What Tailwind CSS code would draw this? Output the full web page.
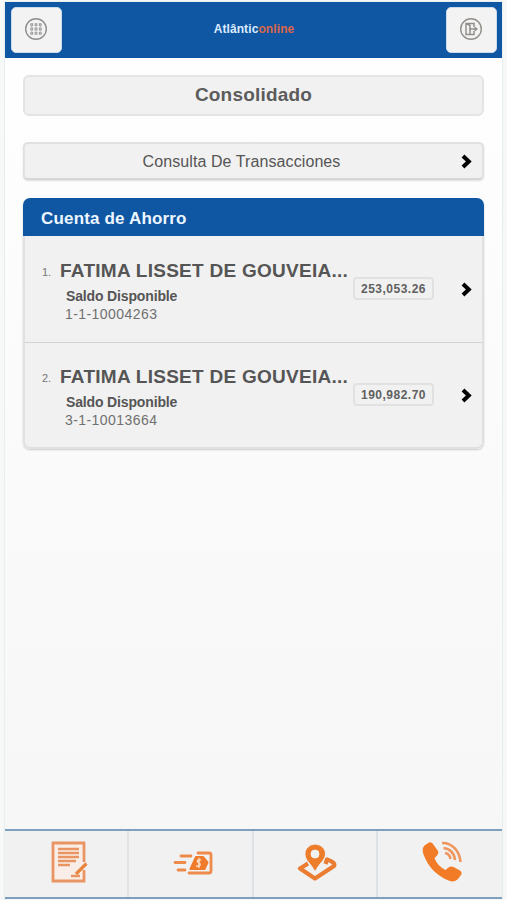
<!DOCTYPE html>
<html lang="es">
<head>
    <meta charset="UTF-8">
    <meta name="viewport" content="width=device-width, initial-scale=1.0">
    <title>Atlántic Online - Consolidado</title>
    <script src="https://cdn.jsdelivr.net/npm/@tailwindcss/browser@4"></script>
</head>
<body class="h-[900px] overflow-hidden bg-[#f7f8f8] px-[5px] pt-[2px] font-['Liberation_Sans',Arial,sans-serif] text-[#555]">
    <div class="flex h-[898px] w-[497px] flex-col bg-linear-to-b from-white to-[#f6f6f6] shadow-[0_0_1px_1px_#e9eeee]">
        <header class="flex h-[56px] shrink-0 items-center justify-between bg-[#0f56a3] pr-[5px] pl-1.5">
            <button class="flex h-[46px] w-[51px] items-center justify-center rounded-[5px] border border-[#c9dcee] bg-[#f3f3f3] pr-px pb-[3px]">
                <svg class="h-6 w-6" viewBox="0 0 24 24" fill="none" stroke="#8f8f8f">
                    <circle cx="12" cy="12" r="10.3" stroke-width="1.4" />
                    <path stroke="#999" stroke-width="2.8" stroke-dasharray="2.8 1.5" d="M6.3 7.7H17.7M6.3 12H17.7M6.3 16.3H17.7" />
                    <path stroke="#bbb" stroke-width="1" d="M7.7 6V18M12 6V18M16.3 6V18" />
                </svg>
            </button>
            <h1 class="pb-[2px] text-[12px] font-bold tracking-[0.1px] text-[#dcecff]">Atlântic<span class="text-[#d9674a]">online</span></h1>
            <button class="flex h-[46px] w-[51px] items-center justify-center rounded-[5px] border border-[#c9dcee] bg-[#f3f3f3] pr-px pb-[3px]">
                <svg class="h-6 w-6" viewBox="0 0 24 24" fill="none" stroke="#928f8b">
                    <circle cx="12" cy="12" r="10.3" stroke-width="1.4" />
                    <path stroke-width="1.5" d="M15 10V6.5H7V17.5H15V14M7.5 6.5L11 8.5V17.5M10 12H17" />
                    <path fill="#928f8b" stroke="none" d="M15.5 9.3L19 12L15.5 14.7Z" />
                </svg>
            </button>
        </header>

        <main class="flex-1 px-[18px] pt-[17px]">
            <h2 class="h-[41px] rounded-[6px] border-2 border-[#e4e4e4] bg-[#f1f1f1] text-center text-[19px] leading-[36px] font-bold tracking-[0.2px] text-[#5c5c5c]">Consolidado</h2>

            <a href="#" class="mt-[26px] flex h-[38px] items-center rounded-[5px] border-2 border-[#e1e1e1] border-b-[#d6d6d6] bg-[#f1f1f1] pr-[10px] shadow-[0_1px_2px_#ddd]">
                <span class="flex-1 pt-[2px] pr-[2px] text-center text-[16px] tracking-[0.09px]">Consulta De Transacciones</span>
                <svg class="h-[15px] w-[12px]" viewBox="0 0 12 15" fill="none" stroke="#050505" stroke-width="4">
                    <path d="M3 2L8.8 7.5L3 13" />
                </svg>
            </a>

            <section class="mt-[18px] overflow-hidden rounded-[7px] shadow-[0_1px_2px_#ccc]">
                <h3 class="h-[38px] bg-[#0f56a3] pl-[18px] text-[17px] leading-[41px] font-bold tracking-[0.17px] text-[#edf6ff]">Cuenta de Ahorro</h3>
                <ol class="rounded-b-[7px] border-2 border-t-0 border-[#e0e0e0] bg-[#f1f1f1]">
                    <li class="flex h-[107px] border-b border-[#d2d2d2] pr-[10px] pl-[17px]">
                        <span class="w-[18px] pt-[29px] text-[11px] leading-[14px] text-[#777]">1.</span>
                        <div class="w-[293px] pt-[23px]">
                            <p class="text-[19px] leading-[23px] font-bold tracking-[0.27px] whitespace-nowrap">FATIMA LISSET DE GOUVEIA...</p>
                            <p class="mt-[5px] pl-[6px] text-[14px] leading-[18px] font-bold tracking-[-0.15px]">Saldo Disponible</p>
                            <p class="pl-[5px] text-[14px] leading-[18px] tracking-[0.43px] text-[#707070]">1-1-10004263</p>
                        </div>
                        <span class="mt-[41px] h-[23px] w-[81px] shrink-0 rounded-[4px] border-2 border-[#e1e1e1] text-center text-[12px] leading-[20px] font-bold tracking-[0.5px] text-[#606060]">253,053.26</span>
                        <svg class="mt-[46px] ml-auto h-[15px] w-[12px]" viewBox="0 0 12 15" fill="none" stroke="#050505" stroke-width="4">
                            <path d="M3 2L8.8 7.5L3 13" />
                        </svg>
                    </li>
                    <li class="flex h-[104px] pr-[10px] pl-[17px]">
                        <span class="w-[18px] pt-[28px] text-[11px] leading-[14px] text-[#777]">2.</span>
                        <div class="w-[293px] pt-[22px]">
                            <p class="text-[19px] leading-[23px] font-bold tracking-[0.27px] whitespace-nowrap">FATIMA LISSET DE GOUVEIA...</p>
                            <p class="mt-[5px] pl-[6px] text-[14px] leading-[18px] font-bold tracking-[-0.15px]">Saldo Disponible</p>
                            <p class="pl-[5px] text-[14px] leading-[18px] tracking-[0.43px] text-[#707070]">3-1-10013664</p>
                        </div>
                        <span class="mt-[40px] h-[23px] w-[81px] shrink-0 rounded-[4px] border-2 border-[#e1e1e1] text-center text-[12px] leading-[20px] font-bold tracking-[0.5px] text-[#606060]">190,982.70</span>
                        <svg class="mt-[45px] ml-auto h-[15px] w-[12px]" viewBox="0 0 12 15" fill="none" stroke="#050505" stroke-width="4">
                            <path d="M3 2L8.8 7.5L3 13" />
                        </svg>
                    </li>
                </ol>
            </section>
        </main>

        <nav class="mb-px grid h-[70px] shrink-0 grid-cols-4 border-y-2 border-[#7ea0bf] bg-[#f1f1f1]">
            <!-- Solicitudes -->
            <a href="#" class="flex items-center justify-center border-r-2 border-[#dfe2e4] pb-[4px]">
                <svg class="ml-[7px] h-[42px] w-[40px]" viewBox="0 0 40 42" fill="none" stroke="#ea9464">
                    <path stroke="none" fill="#f8eee7" d="M3 2H34V40H3Z" />
                    <path stroke-width="2.8" d="M34 21V2H3V40H34V29" />
                    <path stroke-width="2.4" d="M8 8H29M8 12H29M8 16H29M8 20H26M8 24H20M21 35H30" />
                    <path stroke="#e9853f" stroke-width="3.2" d="M26 33L36.5 22.5" />
                </svg>
            </a>
            <!-- Pagos -->
            <a href="#" class="flex items-center justify-center border-r-2 border-[#dfe2e4] pb-[3px]">
                <svg class="ml-[5px] h-[26px] w-[40px]" viewBox="0 0 40 26" fill="none" stroke="#ee8b4b" stroke-width="2.8" stroke-linecap="round" stroke-linejoin="round">
                    <path d="M25 3H36Q38 3 38 5V21Q38 23 36 23H16M8 6H18M2 12.5H12M5 20H12" />
                    <path fill="#f07c2b" stroke="#f07c2b" stroke-width="2" d="M17.5 19L23 7H30L34.5 12.5L31.5 19Z" />
                    <path stroke="#f9dfc9" stroke-width="1.4" d="M27.5 10Q24 9.5 24.5 11.8Q27.8 13.2 27 15.2Q26 16.7 23.5 16M26 8.5V17.5" />
                </svg>
            </a>
            <!-- Ubicaciones -->
            <a href="#" class="flex items-center justify-center border-r-2 border-[#dfe2e4] pb-[3px]">
                <svg class="ml-[4px] h-[38px] w-[40px]" viewBox="0 0 40 38">
                    <path fill="none" stroke="#ea7d32" stroke-width="4.2" stroke-linejoin="round" d="M11 19.5L3 24.5L18 34.5L37 22Q39 18.5 30 15.5L28.5 20" />
                    <path fill="#ed7c2b" stroke="#f1f1f1" stroke-width="1" fill-rule="evenodd" d="M18 27.500Q14.500 21.500 10 16.500Q6 10 9.500 4.500Q13 0 18 0Q23.500 0 27 4.500Q30.500 10.500 26 16.500Q21.500 21.500 18 27.500ZM18 6A4 4 0 1 0 18 14A4 4 0 1 0 18 6Z" />
                </svg>
            </a>
            <!-- Contacto -->
            <a href="#" class="flex items-center justify-center pb-[4px]">
                <svg class="ml-[4px] h-[42px] w-[40px]" viewBox="0 0 40 42">
                    <path fill="#f17b26" d="M2.500 4.500L7 1.500Q9.500 .5 11 3L16 10Q17 12.500 15 14.500L12.500 17Q15 24.500 23.500 29L26.500 26.500Q29 25 31.500 26L38 29.500Q40.500 31.500 39 34L36 38Q32.500 42 26.500 39.500C14.500 34.500 6 25.500 1.500 13.500Q-.5 7.500 2.500 4.500Z" />
                    <path fill="none" stroke="#ee965d" stroke-width="2.6" d="M20 2C30 1.500 37.500 10 38.500 21M21.500 7C28 7.500 32.500 12.500 33 19M23 12C26 12.500 28 14.500 28.500 18" />
                </svg>
            </a>
        </nav>
    </div>
</body>
</html>
